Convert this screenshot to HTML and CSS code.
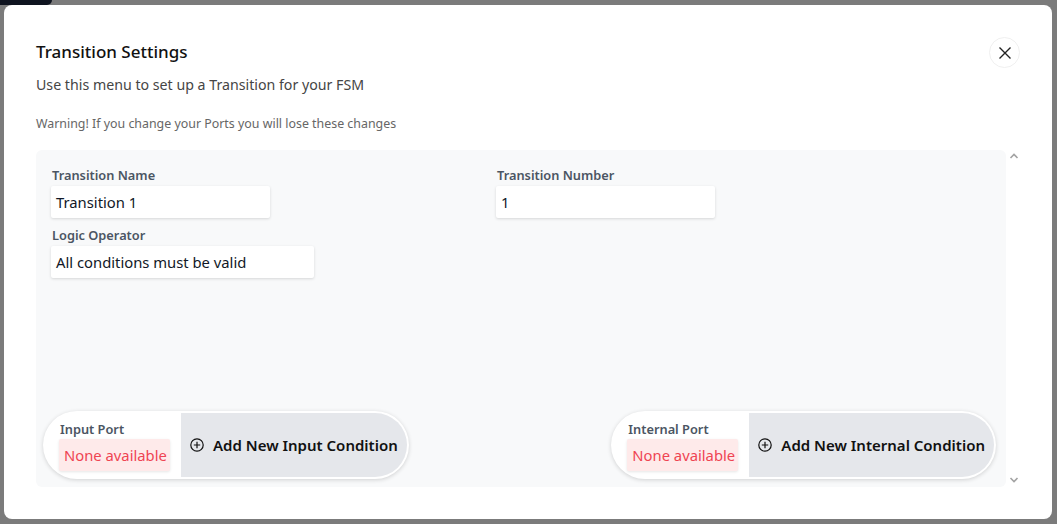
FILE: index.html
```html
<!DOCTYPE html>
<html>
<head>
<meta charset="utf-8">
<link rel="stylesheet" href="styles.css">
</head>
<body>
<div class="backdrop-tab"></div>
<div class="modal">
  <div class="header">
    <div class="title">Transition Settings</div>
    <button class="close" aria-label="close">
      <svg width="14" height="14" viewBox="0 0 14 14"><path d="M1.5 1.5 L12.5 12.5 M12.5 1.5 L1.5 12.5" stroke="#222" stroke-width="1.4" fill="none"/></svg>
    </button>
  </div>
  <p class="subtitle">Use this menu to set up a Transition for your FSM</p>
  <p class="warning">Warning! If you change your Ports you will lose these changes</p>
  <div class="scroller">
    <div class="area">
      <div class="fields">
        <div class="field">
          <div class="label">Transition Name</div>
          <div class="input w-name">Transition 1</div>
        </div>
        <div class="field">
          <div class="label">Transition Number</div>
          <div class="input w-name">1</div>
        </div>
        <div class="field">
          <div class="label">Logic Operator</div>
          <div class="input w-logic">All conditions must be valid</div>
        </div>
      </div>
      <div class="ports">
        <div class="port-card">
          <div class="port-info">
            <div class="label">Input Port</div>
            <div class="none">None available</div>
          </div>
          <div class="add-btn">
            <svg width="14" height="14" viewBox="0 0 14 14"><circle cx="7" cy="7" r="6.2" stroke="#111" stroke-width="1.2" fill="none"/><path d="M7 3.8 V10.2 M3.8 7 H10.2" stroke="#111" stroke-width="1.2"/></svg>
            <span>Add New Input Condition</span>
          </div>
        </div>
        <div class="port-card">
          <div class="port-info">
            <div class="label">Internal Port</div>
            <div class="none">None available</div>
          </div>
          <div class="add-btn">
            <svg width="14" height="14" viewBox="0 0 14 14"><circle cx="7" cy="7" r="6.2" stroke="#111" stroke-width="1.2" fill="none"/><path d="M7 3.8 V10.2 M3.8 7 H10.2" stroke="#111" stroke-width="1.2"/></svg>
            <span>Add New Internal Condition</span>
          </div>
        </div>
      </div>
    </div>
    <div class="scrollbar">
      <svg width="10" height="8" viewBox="0 0 10 8"><path d="M1.5 6 L5 2.5 L8.5 6" stroke="#a3a3a3" stroke-width="1.6" fill="none"/></svg>
      <svg width="10" height="8" viewBox="0 0 10 8"><path d="M1.5 2 L5 5.5 L8.5 2" stroke="#a3a3a3" stroke-width="1.6" fill="none"/></svg>
    </div>
  </div>
</div>
</body>
</html>
```
FILE: styles.css
```css
* { box-sizing: border-box; }
html, body { margin: 0; padding: 0; }
body {
  width: 1057px;
  height: 524px;
  background: #7b7b7b;
  font-family: "Noto Sans", "Open Sans", sans-serif;
  overflow: hidden;
  position: relative;
  padding: 5px 5px 5px 4px;
}
.backdrop-tab {
  position: absolute;
  left: 0;
  top: 0;
  width: 52px;
  height: 5px;
  background: #0f1420;
  border-bottom-right-radius: 5px;
}
.modal {
  position: relative;
  width: 1048px;
  height: 514px;
  background: #fff;
  border-radius: 8px;
  padding: 32px 32px 32px 32px;
  display: flex;
  flex-direction: column;
}
.header {
  display: flex;
  justify-content: space-between;
  align-items: flex-start;
  height: 32px;
}
.title {
  font-size: 17px;
  font-weight: 500;
  color: #111;
  margin-top: 3px;
  line-height: 24px;
}
.close {
  width: 31px;
  height: 31px;
  border-radius: 50%;
  border: 1.5px solid #f0f0f0;
  background: #fff;
  display: flex;
  align-items: center;
  justify-content: center;
  padding: 0;
  margin-top: 0px;
}
.subtitle {
  margin: 0;
  font-size: 14.2px;
  color: #454545;
  line-height: 20px;
  margin-top: 6px;
}
.warning {
  margin: 0;
  font-size: 12.4px;
  color: #666;
  line-height: 16px;
  margin-top: 21px;
}
.scroller {
  display: flex;
  margin-top: 18px;
  height: 337px;
}
.area {
  width: 970px;
  height: 337px;
  background: #f8f9fa;
  border-radius: 6px;
  display: flex;
  flex-direction: column;
  padding: 16px 10px 8px 15px;
}
.scrollbar {
  width: 14px;
  display: flex;
  flex-direction: column;
  justify-content: space-between;
  align-items: center;
  padding: 2px 0 3px 2px;
}
.fields {
  display: grid;
  grid-template-columns: 445px 445px;
  row-gap: 8px;
}
.field { display: flex; flex-direction: column; }
.field .label { margin-bottom: 2px; }
.label {
  font-size: 12.8px;
  font-weight: 600;
  color: #4b5563;
  line-height: 18px;
  padding-left: 1px;
}
.input {
  height: 32px;
  background: #fff;
  box-shadow: 0 1px 3px rgba(0,0,0,0.14);
  border-radius: 2px;
  display: flex;
  align-items: center;
  padding-left: 5px;
  font-size: 14.8px;
  color: #111827;
}
.w-name { width: 219px; }
.w-logic { width: 263px; }
.ports {
  margin-top: auto;
  display: flex;
  justify-content: space-between;
  margin-left: -8px;
}
.port-card {
  display: flex;
  height: 68px;
  background: #fff;
  border-radius: 34px;
  padding: 2px;
  box-shadow: 0 1px 4px rgba(0,0,0,0.16);
}
.port-info {
  width: 136px;
  padding: 7px 0 0 14px;
}
.port-info .label { padding-left: 1px; }
.none {
  margin-top: 1px;
  width: 111px;
  height: 32px;
  background: #feeaea;
  color: #ef4452;
  font-size: 14.8px;
  display: flex;
  align-items: center;
  padding-left: 5px;
  border-radius: 2px;
  box-shadow: 0 1px 3px rgba(0,0,0,0.1);
}
.add-btn {
  background: #e5e7eb;
  border-radius: 0 32px 32px 0;
  display: flex;
  align-items: center;
  gap: 9px;
  padding: 0 9px 0 9px;
  font-size: 15px;
  font-weight: 600;
  color: #111;
}
.add-btn svg { flex: none; }
```
